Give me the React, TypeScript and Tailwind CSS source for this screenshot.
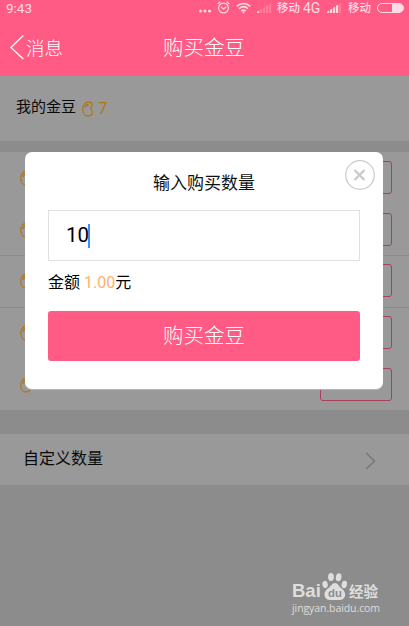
// App.tsx
import { useState } from "react";

const rows = [
  { id: 1, className: "h-[52px] pt-[9px]" },
  { id: 2, className: "h-[51px] pt-[9px]" },
  { id: 3, className: "h-[52px] pt-2 border-t border-[#8b8b8b]" },
  { id: 4, className: "h-[52px] pt-2 border-t border-[#8b8b8b]" },
  { id: 5, className: "h-[51px] pt-[9px]" },
];

function Bean() {
  return (
    <svg width="12" height="16" viewBox="0 0 12 16" fill="none" stroke="#b27817" strokeWidth="1.3" strokeLinecap="round">
      <path d="M6.500 1C3 1 .8 4.600.8 8.400c0 3.900 2 6.600 5 6.600 2.600 0 4.500-1.500 4.500-3.700 0-1.900-1.400-2.500-1.400-3.900 0-1.300 1.300-1.700 1.300-3.500C10.200 2 8.600 1 6.500 1z" />
      <path d="M3.200 6.400c.3-1.500 1.200-2.600 2.700-2.900l-.3 1.400" />
    </svg>
  );
}

function Signal({ level }: { level: number }) {
  return (
    <svg width="15" height="10" viewBox="0 0 15 10" fill="#ffdbe4">
      {[0, 1, 2, 3, 4].map((i) => (
        <path
          key={i}
          d={`M${i * 3} ${9 - i * 2}l2.200-1.500V10h-2.200z`}
          opacity={i < level ? 1 : 0.25}
        />
      ))}
    </svg>
  );
}

function StatusBar() {
  return (
    <div className="h-4 flex items-center pl-[6px] pr-[5px] text-[12px] leading-4 text-[#ffdbe4]">
      <span className="font-['Roboto'] text-[13.500px]">9:43</span>
      <svg className="ml-auto mt-[5px]" width="13" height="4" viewBox="0 0 13 4" fill="currentColor">
        <circle cx="1.500" cy="2" r="1.500" />
        <circle cx="6" cy="2" r="1.500" />
        <circle cx="10.500" cy="2" r="1.500" />
      </svg>
      <svg className="ml-[5px] -mt-px" width="13" height="13" viewBox="0 0 13 13" fill="none" stroke="currentColor" strokeLinecap="round">
        <circle cx="6.500" cy="7" r="4.900" strokeWidth="1.200" />
        <path d="M1 2.700 3 1M12 2.700 10 1M4.300 6.200l2.200 1.700 2.200-1.700" strokeWidth="1.200" />
      </svg>
      <svg className="ml-[6px] -mt-px" width="15" height="12" viewBox="0 0 15 12" fill="none" stroke="currentColor" strokeWidth="1.600">
        <path d="M.7 4.300c4-3.700 9.600-3.700 13.600 0M3 6.700c2.700-2.400 6.300-2.400 9 0M5.200 9c1.500-1.200 3.100-1.200 4.600 0" />
        <circle cx="7.500" cy="10.500" r="1" fill="currentColor" stroke="none" />
      </svg>
      <span className="ml-[6px] flex"><Signal level={1} /></span>
      <span className="ml-[5px] font-medium text-[11.500px]">移动</span>
      <span className="ml-[3px] font-['Roboto'] text-[14px] tracking-[-0.200px]">4G</span>
      <span className="ml-[7px] flex"><Signal level={4} /></span>
      <span className="ml-[6px] font-medium text-[11.500px]">移动</span>
      <svg className="ml-[6px] -mt-px" width="27" height="10" viewBox="0 0 27 10">
        <rect x=".5" y=".5" width="26" height="9" rx="4.500" fill="none" stroke="currentColor" />
        <path d="M15 1h7.500a4 4 0 0 1 0 8H15z" fill="currentColor" />
      </svg>
    </div>
  );
}

function BuyDialog() {
  const [count, setCount] = useState("10");

  return (
    <div className="absolute left-[25px] top-[152px] w-[358px] h-[237px] rounded-[7px] bg-white px-[23px] shadow-[0_1px_0_#b5b5b5]">
      {/* Close button */}
      <button className="absolute right-2 top-2 size-[30px]">
        <svg width="30" height="30" viewBox="0 0 30 30" fill="none" stroke="#cacaca">
          <circle cx="15" cy="15" r="14.300" strokeWidth="1.200" />
          <path d="M9.500 10l10 10M19.500 10l-10 10" strokeWidth="2.400" />
        </svg>
      </button>

      <h2 className="pt-[19px] text-center text-[17px] leading-6 text-[#111]">输入购买数量</h2>

      <div className="mt-[15px] h-[51px] flex items-center border-[1.500px] border-[#e0e0e0] pl-[17px]">
        <input
          type="text"
          className="w-[24px] font-['Roboto'] text-[20.500px] text-black bg-transparent outline-none"
          value={count}
          onChange={(e) => setCount(e.target.value)}
        />
        <span className="-ml-[2px] w-[2px] h-6 bg-[#3f8df5]" />
      </div>

      <p className="mt-[10px] h-6 text-[16px] leading-6 text-black whitespace-pre">
        金额 <span className="text-[#ffb26a]">1.00</span>元
      </p>

      <button className="mt-4 w-full h-[50px] rounded-[3px] bg-[#ff5b84] text-[20.500px] font-light text-white leading-[50px]">
        购买金豆
      </button>
    </div>
  );
}

function Watermark() {
  return (
    <div className="absolute left-[292px] top-[571px] w-[92px] text-[#dedede]">
      <div className="flex h-[31px] items-end">
        <span className="w-[30px] font-['Liberation_Sans'] text-[18.500px] font-bold leading-[20px] pb-px">Bai</span>
        <svg width="26" height="30" viewBox="0 0 25 29" fill="currentColor" className="shrink-0 mb-px">
          <ellipse cx="2.900" cy="13" rx="2.600" ry="3.500" transform="rotate(-12 2.900 13)" />
          <ellipse cx="8.600" cy="5.800" rx="2.800" ry="3.900" />
          <ellipse cx="16" cy="6" rx="2.700" ry="3.900" transform="rotate(10 16 6)" />
          <ellipse cx="21.500" cy="13" rx="2.600" ry="3.600" transform="rotate(12 21.500 13)" />
          <path d="M12.500 11.500c3 0 3.600 3.300 5.800 5 2.200 1.800 4 3.200 4 6.300 0 3-2 5.200-4.800 5.200H7.300c-3 0-5-2.200-5-5.200 0-3.100 1.800-4.500 4-6.300 2.200-1.700 3.200-5 6.200-5z" />
          <text x="12.500" y="25.500" textAnchor="middle" fill="#8c8c8c" fontSize="11" fontWeight="700" fontFamily="Liberation Sans, sans-serif">du</text>
        </svg>
        <span className="ml-px shrink-0 text-[14.500px] font-bold leading-[17px] pb-[1px]">经验</span>
      </div>
      <div className="mt-px font-['Open_Sans'] text-[10.500px] font-medium leading-[11px] tracking-[-0.080px]">jingyan.baidu.com</div>
    </div>
  );
}

export default function App() {
  return (
    <div className="relative w-[409px] h-[626px] overflow-hidden bg-[#8c8c8c] font-[Roboto,'Noto_Sans_CJK_SC',sans-serif]">
      <header className="h-[76px] bg-[#ff5b84] text-white">
        <StatusBar />
        <div className="grid grid-cols-3 h-[60px] pl-[10px] pr-[11px] pt-[5px]">
          <div className="flex items-center">
            <svg className="-mt-[3px]" width="14" height="26" viewBox="0 0 14 26" fill="none" stroke="#fff" strokeWidth="1.300">
              <path d="M13.300 1.500 1 13.500l12.300 11.500" />
            </svg>
            <span className="ml-[2px] text-[18.500px] font-light leading-7">消息</span>
          </div>
          <h1 className="flex items-center justify-center text-[20.500px] font-light whitespace-nowrap">购买金豆</h1>
        </div>
      </header>

      {/* Balance */}
      <section className="h-[65px] flex items-center bg-[#999] pl-4">
        <span className="pb-[3px] text-[15px] text-[#0a0a0a]">我的金豆</span>
        <span className="ml-[6px] flex"><Bean /></span>
        <span className="ml-[4px] text-[17px] text-[#b27817]">7</span>
      </section>

      {/* Packages */}
      <section className="mt-[11px] bg-[#999]">
        {rows.map((row) => (
          <div key={row.id} className={`flex items-start justify-between pl-5 pr-[17px] ${row.className}`}>
            <span className="mt-[9px]"><Bean /></span>
            <span className="w-[72px] h-[33px] rounded-[3px] border border-[#a8405b]" />
          </div>
        ))}
      </section>

      <section className="mt-6 h-[51px] flex items-center justify-between bg-[#999] pl-[23px] pr-[33px]">
        <span className="pb-[2px] text-[16px] text-[#0a0a0a]">自定义数量</span>
        <svg width="11" height="18" viewBox="0 0 11 18" fill="none" stroke="#777" strokeWidth="1.500" className="mt-[3px]">
          <path d="M1 1l8.500 8L1 17" />
        </svg>
      </section>

      <BuyDialog />
      <Watermark />
    </div>
  );
}
